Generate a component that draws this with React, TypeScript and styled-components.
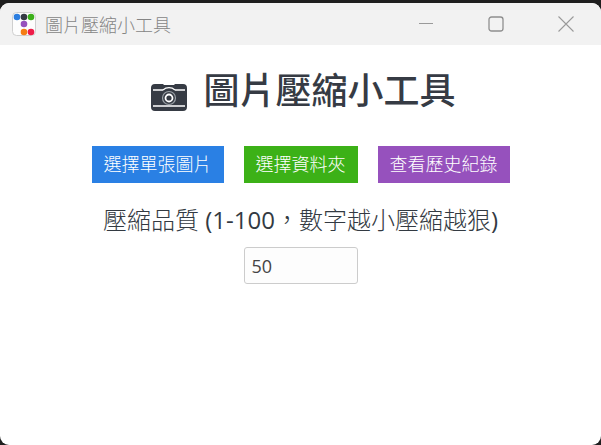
import styled, { createGlobalStyle } from "styled-components";

const GlobalStyle = createGlobalStyle`
  html, body {
    margin: 0;
    height: 100%;
    overflow: hidden;
    background: #1f1f1f;
  }
  * {
    box-sizing: border-box;
  }
`;

const cjk = `"Open Sans", "Noto Sans CJK TC", sans-serif`;

const Win = styled.div`
  width: 601px;
  height: 445px;
  padding-top: 3px;
`;

const Frame = styled.div`
  height: 442px;
  display: flex;
  flex-direction: column;
  background: #fff;
  border-radius: 9px;
  overflow: hidden;
`;

const TitleBar = styled.div`
  height: 42px;
  flex: none;
  display: flex;
  align-items: center;
  background: #f2f2f2;
  padding-left: 12px;
`;

const AppName = styled.span`
  margin-left: 9px;
  font-family: ${cjk};
  font-size: 18px;
  font-weight: 300;
  color: #858585;
`;

const WinControls = styled.div`
  margin-left: auto;
  display: flex;
  height: 100%;
`;

const WinButton = styled.div`
  width: 70px;
  display: flex;
  align-items: center;
  justify-content: center;
`;

const Main = styled.main`
  display: flex;
  flex-direction: column;
  align-items: center;
  font-family: ${cjk};
  color: #2c3e50;
`;

const Heading = styled.h1`
  margin: 22px 0 0 5px;
  height: 48px;
  display: flex;
  align-items: center;
  gap: 15px;
  font-size: 36px;
  line-height: 48px;
  font-weight: 500;
  color: #363b44;
`;

const CameraSlot = styled.span`
  display: flex;
  margin-top: 11px;
`;

const ButtonRow = styled.div`
  margin-top: 31px;
  display: flex;
  gap: 20px;
`;

const ActionButton = styled.button<{ $bg: string }>`
  height: 37px;
  padding: 0 12px;
  border: 0;
  background: ${(p) => p.$bg};
  color: #fff;
  font-family: ${cjk};
  font-size: 18px;
  font-weight: 300;
  line-height: 37px;
`;

const QualityLabel = styled.label`
  display: block;
  height: 32px;
  margin-top: 20px;
  font-size: 24px;
  font-weight: 300;
  line-height: 32px;
  color: #333a42;
`;

const Digits = styled.span`
  font-weight: 400;
`;

const Comma = styled.span`
  font-family: "Noto Sans CJK TC", sans-serif;
`;

const QualityInput = styled.input`
  margin-top: 12px;
  width: 114px;
  height: 37px;
  padding: 0 7px;
  border: 1px solid #ccc;
  border-radius: 3px;
  background: #fdfdfd;
  font-family: ${cjk};
  font-size: 18px;
  color: #444;
  outline: none;
`;

const AppIcon = () => (
  <svg width="24" height="24" viewBox="0 0 24 24">
    <rect x="0.5" y="0.5" width="23" height="23" rx="4" fill="#fdfdfd" stroke="#cfcfcf" />
    <circle cx="5" cy="5" r="3.3" fill="#2d7fe0" />
    <circle cx="12" cy="5" r="3.3" fill="#363b44" />
    <circle cx="19" cy="5" r="3.3" fill="#3cb01a" />
    <circle cx="12" cy="12" r="3.3" fill="#9650bd" />
    <circle cx="12" cy="20" r="3.3" fill="#f57c14" />
    <circle cx="19" cy="20" r="3.3" fill="#ee1c48" />
  </svg>
);

const CameraIcon = () => (
  <svg width="38" height="28" viewBox="0 0 38 28" style={{ display: "block" }}>
    <path
      d="M5 1h8l1 1h10l1-1h8a4 4 0 0 1 4 4v19a4 4 0 0 1-4 4H5a4 4 0 0 1-4-4V5a4 4 0 0 1 4-4z"
      fill="#363b44"
    />
    <path d="M3 7h10M25 7h10M3 23h32" stroke="#fff" strokeWidth="1.6" fill="none" />
    <path d="M13 7a9 9 0 0 1 12 0" stroke="#fff" strokeWidth="1.2" fill="none" />
    <circle cx="19" cy="15" r="6.5" fill="none" stroke="#9aa0a6" strokeWidth="1.2" />
    <circle cx="19" cy="15" r="3.5" fill="none" stroke="#fff" strokeWidth="1.8" />
  </svg>
);

const App = () => (
  <div lang="zh-TW">
    <GlobalStyle />
    <Win>
      <Frame>
        <TitleBar>
          <AppIcon />
          <AppName>圖片壓縮小工具</AppName>
          <WinControls>
            <WinButton>
              <svg width="16" height="16" viewBox="0 0 16 16">
                <path d="M1 7.5h14" stroke="#9a9a9a" />
              </svg>
            </WinButton>
            <WinButton>
              <svg width="16" height="16" viewBox="0 0 16 16">
                <rect x="1" y="1" width="14" height="14" rx="2.5" fill="none" stroke="#8f8f8f" strokeWidth="1.3" />
              </svg>
            </WinButton>
            <WinButton>
              <svg width="16" height="16" viewBox="0 0 16 16">
                <path d="M0.5 0.5l15 15M15.5 0.5l-15 15" stroke="#9a9a9a" strokeWidth="1.1" />
              </svg>
            </WinButton>
          </WinControls>
        </TitleBar>
        <Main>
          <Heading>
            <CameraSlot>
              <CameraIcon />
            </CameraSlot>
            圖片壓縮小工具
          </Heading>
          <ButtonRow>
            <ActionButton $bg="#2a80e4">選擇單張圖片</ActionButton>
            <ActionButton $bg="#3cb117">選擇資料夾</ActionButton>
            <ActionButton $bg="#9651bd">查看歷史紀錄</ActionButton>
          </ButtonRow>
          <QualityLabel>
            壓縮品質 <Digits>(1-100</Digits>
            <Comma>，</Comma>數字越小壓縮越狠<Digits>)</Digits>
          </QualityLabel>
          <QualityInput type="number" defaultValue={50} />
        </Main>
      </Frame>
    </Win>
  </div>
);

export default App;
